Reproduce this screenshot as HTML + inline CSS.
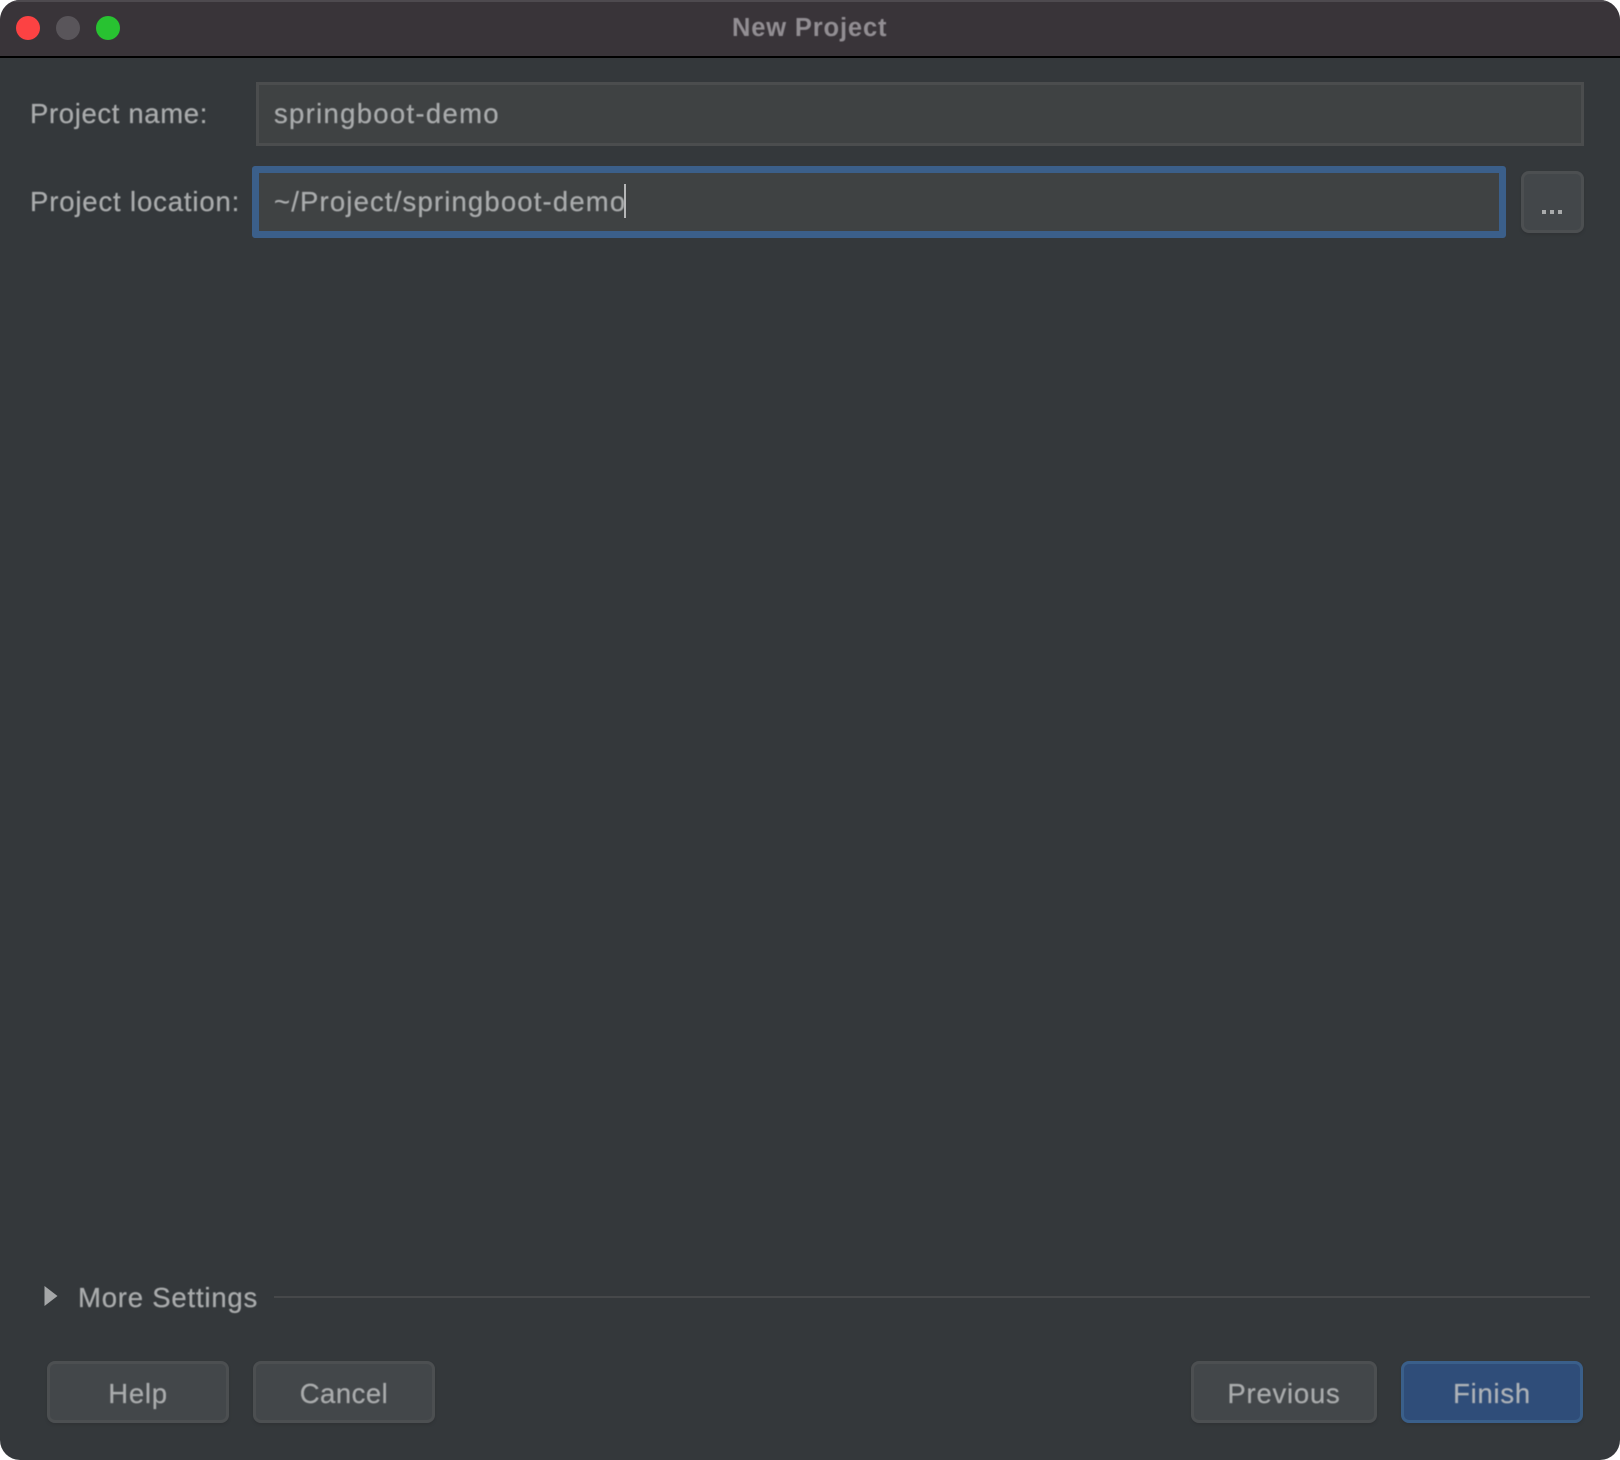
<!DOCTYPE html>
<html><head><meta charset="utf-8"><style>
html,body{margin:0;padding:0;background:#fff;width:1620px;height:1460px;overflow:hidden}
#w{position:absolute;left:0;top:0;width:1620px;height:1460px;background:#34383b;border-radius:20px;overflow:hidden;font-family:"Liberation Sans",sans-serif}
.a{position:absolute;box-sizing:border-box}
.t{position:absolute;font-size:27.5px;line-height:34px;color:#aaacad;white-space:nowrap;filter:blur(.4px);letter-spacing:.75px;-webkit-text-stroke:.25px #aaacad}
.c{border-radius:50%;width:24px;height:24px;top:16px}
.b{background:#43474a;border:3px solid #4c4f51;border-radius:8px;box-shadow:0 2px 2px #303336}
.bt{text-align:center;top:1377px}
</style></head><body><div id="w">
<div class="a" style="left:0;top:0;width:1620px;height:56px;background:#393439;border-top:2px solid #4e4a4f"></div>
<div class="a" style="left:0;top:56px;width:1620px;height:2px;background:#000"></div>
<div class="a c" style="left:16px;background:#fc4243"></div>
<div class="a c" style="left:56px;background:#59555a"></div>
<div class="a c" style="left:96px;background:#28c231"></div>
<div class="t" style="left:732px;top:11px;font-size:25.5px;font-weight:bold;color:#928e93;letter-spacing:.85px;-webkit-text-stroke:0">New Project</div>

<div class="t" style="left:30px;top:97px;letter-spacing:.64px">Project name:</div>
<div class="a" style="left:256px;top:82px;width:1328px;height:64px;background:#3f4243;border:3px solid #4b4d4e"></div>
<div class="t" style="left:274px;top:97px;letter-spacing:1.3px">springboot-demo</div>

<div class="t" style="left:30px;top:185px;letter-spacing:.85px">Project location:</div>
<div class="a" style="left:252px;top:166px;width:1254px;height:72px;background:#3f4243;border:7px solid #3b5f8a;border-radius:3px"></div>
<div class="t" style="left:274px;top:185px;letter-spacing:1.16px">~/Project/springboot-demo</div>
<div class="a" style="left:624px;top:184px;width:2px;height:34px;background:#b5b6b7"></div>

<div class="a b" style="left:1521px;top:171px;width:63px;height:62px"></div>
<div class="a" style="left:1542px;top:210px;width:4px;height:4px;background:#a9abac"></div>
<div class="a" style="left:1550px;top:210px;width:4px;height:4px;background:#a9abac"></div>
<div class="a" style="left:1558px;top:210px;width:4px;height:4px;background:#a9abac"></div>

<svg class="a" style="left:44px;top:1285px" width="14" height="22"><path d="M0.5 1L13.5 11L0.5 21Z" fill="#a5a7a8"/></svg>
<div class="t" style="left:78px;top:1281px;letter-spacing:.8px">More Settings</div>
<div class="a" style="left:274px;top:1296px;width:1316px;height:2px;background:#46484a"></div>

<div class="a b" style="left:47px;top:1361px;width:182px;height:62px"></div>
<div class="t bt" style="left:47px;width:182px">Help</div>
<div class="a b" style="left:253px;top:1361px;width:182px;height:62px"></div>
<div class="t bt" style="left:253px;width:182px;letter-spacing:.5px">Cancel</div>
<div class="a b" style="left:1191px;top:1361px;width:186px;height:62px"></div>
<div class="t bt" style="left:1191px;width:186px;letter-spacing:.77px">Previous</div>
<div class="a b" style="left:1401px;top:1361px;width:182px;height:62px;background:#2f4d79;border-color:#3a5f8a"></div>
<div class="t bt" style="left:1401px;width:182px;color:#aeb3b9">Finish</div>
</div></body></html>
